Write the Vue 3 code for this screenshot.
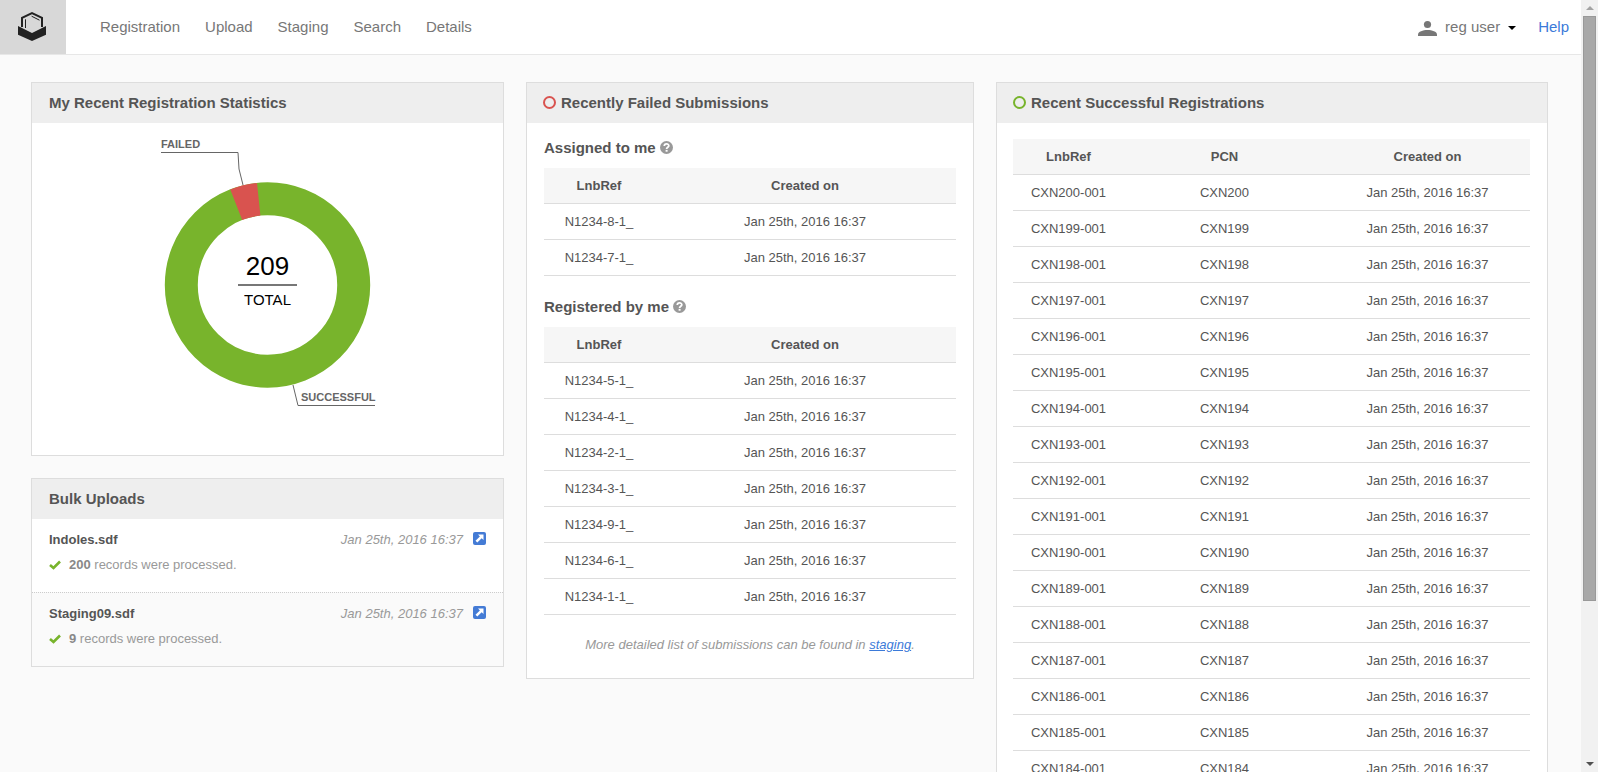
<script setup>
const navItems = ['Registration', 'Upload', 'Staging', 'Search', 'Details']
const stamp = 'Jan 25th, 2016 16:37'

const uploads = [
  { file: 'Indoles.sdf', count: 200 },
  { file: 'Staging09.sdf', count: 9 },
]

const failedGroups = [
  { title: 'Assigned to me', refs: ['N1234-8-1_', 'N1234-7-1_'] },
  {
    title: 'Registered by me',
    refs: ['N1234-5-1_', 'N1234-4-1_', 'N1234-2-1_', 'N1234-3-1_', 'N1234-9-1_', 'N1234-6-1_', 'N1234-1-1_'],
  },
]

const registrations = Array.from({ length: 17 }, (_, i) => `CXN${200 - i}`)
</script>

<template>
  <div class="window">
    <div class="page">
      <header class="topbar">
        <a class="logo" href="#" aria-label="Home">
          <svg width="30" height="30" viewBox="0 0 30 30" aria-hidden="true">
            <path d="M5 15V5.900L15 1.200L25 5.900V15" fill="none" stroke="#222" stroke-width="2" />
            <path d="M8.500 16V7.300M14.600 4.200L22.500 8.200" fill="none" stroke="#222" stroke-width="1" />
            <path d="M1 14L15 21L29 14V22.700L15 29L1 22.700Z" fill="#222" />
          </svg>
        </a>
        <nav class="nav">
          <a v-for="item in navItems" :key="item" href="#">{{ item }}</a>
        </nav>
        <button class="user" type="button">
          <svg width="19" height="18" viewBox="0 0 19 18" aria-hidden="true">
            <circle cx="9.500" cy="6.500" r="3.600" fill="#777" />
            <path d="M0 18V16.500C0 13.500 5 12 9.500 12S19 13.500 19 16.500V18Z" fill="#777" />
          </svg>
          <span>reg user</span>
          <svg width="8" height="6" viewBox="0 0 8 6" aria-hidden="true"><path d="M0 2H8L4 6Z" fill="#000" /></svg>
        </button>
        <a class="help" href="#">Help</a>
      </header>

      <main class="columns">
        <div class="stack">
          <section class="card">
            <h2 class="card-head plain">My Recent Registration Statistics</h2>
            <svg class="donut" width="221" height="332" viewBox="0 0 221 332" role="img" aria-label="Registration statistics">
              <circle cx="110.500" cy="162" r="86.200" fill="none" stroke="#78b42c" stroke-width="33" />
              <path d="M73.300 66.400A102.700 102.700 0 0 1 100 59.900L103.400 92.600A69.700 69.700 0 0 0 85.200 97.100Z" fill="#d9534f" />
              <path d="M4 29.500H81L82 46L86 62M136 262L141 282.500H218" fill="none" stroke="#666" />
              <text class="slice" x="4" y="25">FAILED</text>
              <text class="slice" x="144" y="278">SUCCESSFUL</text>
              <text class="total" x="110.500" y="152">209</text>
              <path d="M81 162H140" stroke="#777" stroke-width="2" />
              <text class="caption" x="110.500" y="182">TOTAL</text>
            </svg>
          </section>

          <section class="card">
            <h2 class="card-head plain">Bulk Uploads</h2>
            <ul class="uploads">
              <li v-for="u in uploads" :key="u.file">
                <div class="line">
                  <strong class="file">{{ u.file }}</strong>
                  <em class="when">{{ stamp }}</em>
                  <a class="open" href="#" aria-label="Open upload">
                    <svg width="13" height="13" viewBox="0 0 13 13" aria-hidden="true">
                      <rect width="13" height="13" rx="2" fill="#447bd5" />
                      <path d="M5 2.500H10.500V8L8.700 6.200L4.300 10.600L2.500 8.800L6.900 4.400Z" fill="#fff" />
                    </svg>
                  </a>
                </div>
                <div class="line result">
                  <svg width="12" height="10" viewBox="0 0 12 10" aria-hidden="true">
                    <path d="M1 5L4.500 8L11 1.500" fill="none" stroke="#78b42c" stroke-width="2.600" />
                  </svg>
                  <span><b>{{ u.count }}</b> records were processed.</span>
                </div>
              </li>
            </ul>
          </section>
        </div>

        <section class="card">
          <h2 class="card-head"><i class="ring failed"></i>Recently Failed Submissions</h2>
          <div class="failed-body">
            <template v-for="g in failedGroups" :key="g.title">
              <h3 class="group">
                {{ g.title }}
                <svg width="13" height="13" viewBox="0 0 13 13" aria-hidden="true">
                  <circle cx="6.500" cy="6.500" r="6.500" fill="#999" />
                  <path d="M4.300 5C4.300 2.200 8.800 2.200 8.800 4.800C8.800 6.300 6.600 6.200 6.600 7.900" fill="none" stroke="#fff" stroke-width="1.800" />
                  <path d="M5.600 8.900H7.600V10.700H5.600Z" fill="#fff" />
                </svg>
              </h3>
              <table class="grid">
                <colgroup><col class="ref-failed" /><col /></colgroup>
                <thead>
                  <tr><th>LnbRef</th><th>Created on</th></tr>
                </thead>
                <tbody>
                  <tr v-for="r in g.refs" :key="r"><td>{{ r }}</td><td>{{ stamp }}</td></tr>
                </tbody>
              </table>
            </template>
            <p class="more">More detailed list of submissions can be found in <a href="#">staging</a>.</p>
          </div>
        </section>

        <section class="card">
          <h2 class="card-head"><i class="ring ok"></i>Recent Successful Registrations</h2>
          <div class="ok-body">
            <table class="grid">
              <colgroup><col class="ref-ok" /><col class="pcn" /><col /></colgroup>
              <thead>
                <tr><th>LnbRef</th><th>PCN</th><th>Created on</th></tr>
              </thead>
              <tbody>
                <tr v-for="r in registrations" :key="r">
                  <td>{{ r }}-001</td><td>{{ r }}</td><td>{{ stamp }}</td>
                </tr>
              </tbody>
            </table>
          </div>
        </section>
      </main>
    </div>

    <div class="scrollbar" aria-hidden="true">
      <div class="arrow"><svg width="8" height="4" viewBox="0 0 8 4"><path d="M0 4H8L4 0Z" fill="#a3a3a3" /></svg></div>
      <div class="thumb"></div>
      <div class="rest"></div>
      <div class="arrow"><svg width="8" height="4" viewBox="0 0 8 4"><path d="M0 0H8L4 4Z" fill="#505050" /></svg></div>
    </div>
  </div>
</template>

<style>
html,
body {
  background: #fafafa;
}
</style>

<style scoped>
.window {
  display: flex;
  height: 100vh;
  overflow: hidden;
  font-family: "Liberation Sans", Arial, sans-serif;
  font-size: 13px;
  color: #555;
}
.window * {
  box-sizing: border-box;
}
.page {
  flex: 1;
  min-width: 0;
  overflow-y: auto;
  scrollbar-width: none;
  background: #fafafa;
}
a {
  color: #3b7ad9;
}
.topbar {
  display: flex;
  align-items: stretch;
  height: 55px;
  padding-right: 12px;
  background: #fff;
  border-bottom: 1px solid #e7e7e7;
  font-size: 15px;
  line-height: 54px;
}
.logo {
  display: flex;
  align-items: center;
  justify-content: center;
  width: 66px;
  padding-right: 2px;
  background: #d8d8d8;
}
.nav {
  display: flex;
  flex: 1;
  gap: 25px;
  padding-left: 34px;
}
.nav a {
  color: #777;
  text-decoration: none;
}
.user {
  display: flex;
  align-items: center;
  gap: 8px;
  padding: 0;
  border: 0;
  background: none;
  font: inherit;
  color: #777;
}
.help {
  margin-left: 22px;
  text-decoration: none;
}
.columns {
  display: grid;
  grid-template-columns: 473fr 448fr 552fr;
  align-items: start;
  gap: 22px;
  padding: 27px 33px 24px 31px;
}
.stack {
  display: grid;
  gap: 22px;
}
.card {
  min-width: 0;
  background: #fff;
  border: 1px solid #ddd;
}
.card-head {
  display: flex;
  align-items: center;
  gap: 5px;
  height: 40px;
  margin: 0;
  padding: 0 16px 2px;
  background: #eee;
  font-size: 15px;
}
.plain {
  padding-left: 17px;
}
.ring {
  width: 13px;
  height: 13px;
  border: 2px solid;
  border-radius: 50%;
}
.failed {
  border-color: #d9534f;
}
.ok {
  border-color: #78b42c;
}
.donut {
  display: block;
  margin: 0 auto;
}
.slice {
  font-size: 11px;
  font-weight: bold;
  fill: #666;
}
.total,
.caption {
  text-anchor: middle;
  fill: #000;
}
.total {
  font-size: 26px;
}
.caption {
  font-size: 15px;
}
.uploads {
  margin: 0;
  padding: 0;
  list-style: none;
}
.uploads li {
  padding: 8px 17px 15px;
}
.uploads li + li {
  border-top: 1px dotted #ccc;
  background: #fafafa;
}
.line {
  display: flex;
  align-items: center;
  height: 25px;
  color: #999;
}
.file {
  flex: 1;
  color: #555;
}
.open {
  display: flex;
  margin-left: 10px;
  padding-bottom: 2px;
}
.result {
  gap: 8px;
}
.result b {
  color: #888;
}
.failed-body {
  padding: 0 17px 21px;
}
.group {
  display: flex;
  align-items: center;
  gap: 4px;
  height: 51px;
  margin: 0;
  padding-top: 9px;
  font-size: 15px;
}
.failed-body .group:first-child {
  height: 45px;
  padding-top: 3px;
}
.grid {
  width: 100%;
  border-spacing: 0;
  table-layout: fixed;
}
.grid th,
.grid td {
  height: 36px;
  padding: 0;
  border-bottom: 1px solid #ddd;
  text-align: center;
}
.grid th {
  background: #f6f6f6;
}
.ref-failed {
  width: 110px;
}
.ref-ok {
  width: 111px;
}
.pcn {
  width: 201px;
}
.more {
  margin: 0;
  padding-top: 18px;
  color: #999;
  font-style: italic;
  line-height: 24px;
  text-align: center;
}
.ok-body {
  padding: 16px 17px 16px 16px;
}
.scrollbar {
  display: flex;
  flex-direction: column;
  width: 17px;
  background: #f1f1f1;
}
.arrow {
  display: flex;
  align-items: center;
  justify-content: center;
  height: 16px;
}
.thumb {
  flex: 585;
  margin: 0 2px;
  background: #a8a8a8;
  border: 1px solid #999;
}
.rest {
  flex: 155;
}
</style>
